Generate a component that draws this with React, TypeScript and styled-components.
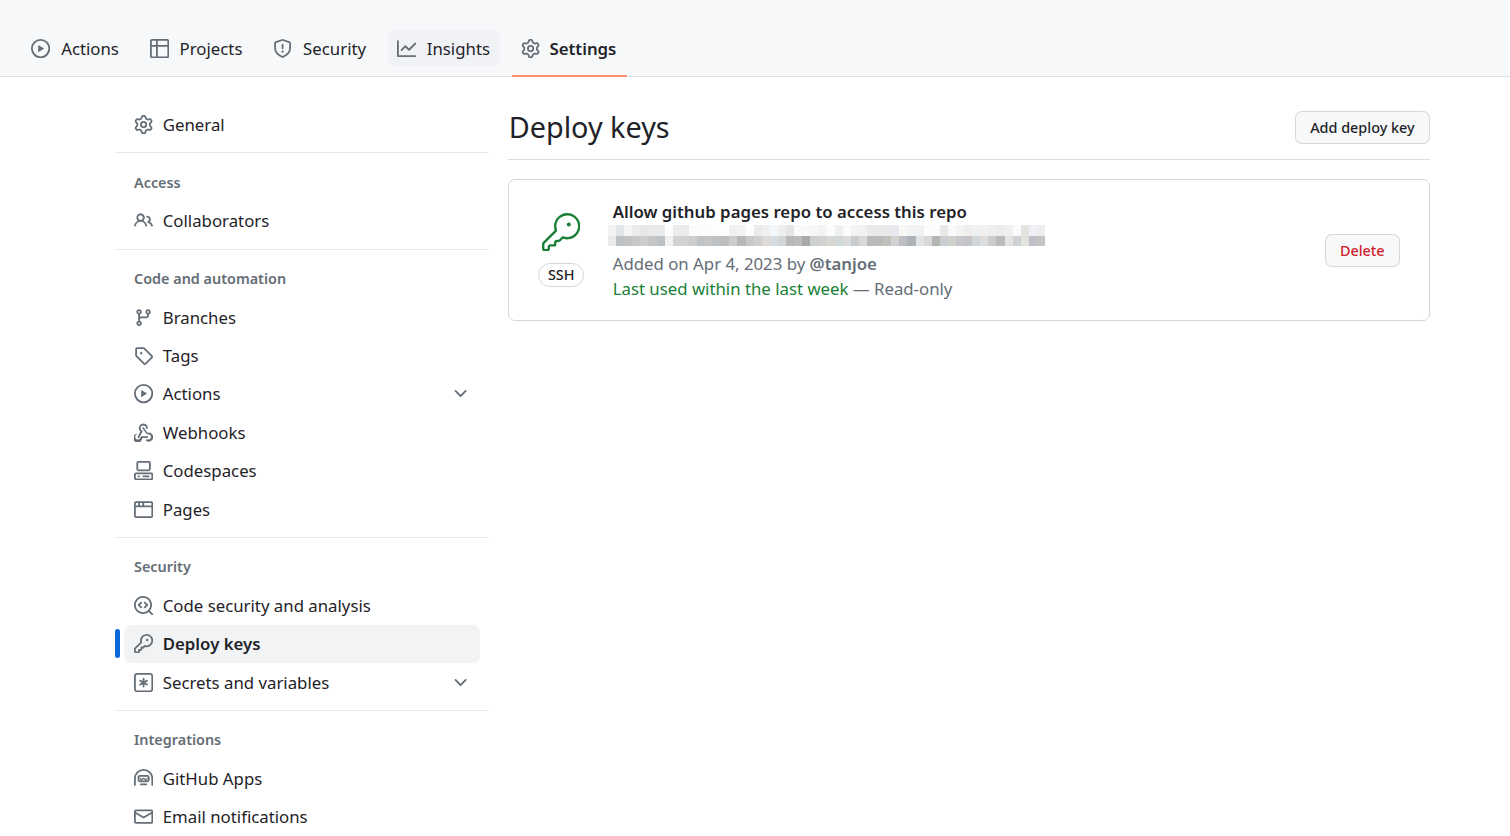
import React from "react";
import styled, { createGlobalStyle } from "styled-components";
import { GoKey } from "react-icons/go";

const Global = createGlobalStyle`
  html, body { margin: 0; padding: 0; background: #fff; height: 836px; overflow: hidden; }
  body { font-family: "Noto Sans", sans-serif; font-size: 16.8px; line-height: 1.5; color: #1f2328; }
`;

const TopBar = styled.nav`
  display: flex; gap: 11.5px; height: 45.5px;
  padding: 30px 0 0 22.2px; background: #f6f8fa; border-bottom: 1px solid #d8dee4;
`;
const Tab = styled.a<{ $active?: boolean; $hover?: boolean }>`
  position: relative; display: flex; align-items: center; gap: ${(p) => (p.$active ? "9.6px" : "10.8px")};
  height: 36px; box-sizing: border-box;
  padding: 1.5px 10.2px 0 9px; border-radius: 7px; color: #1f2328; font-weight: ${(p) => (p.$active ? 600 : 400)};
  background: ${(p) => (p.$hover ? "rgba(175,184,193,0.08)" : "transparent")};
  svg { color: #656d76; flex: none; margin-top: -1px; }
  ${(p) => p.$active && `&::after { content: ""; position: absolute; left: 0; right: 0; bottom: -11px; height: 2.4px; background: #fd8c73; }`}
`;
const Layout = styled.div`
  display: flex; padding: 29.2px 80px 0 114.8px; gap: 19px;
`;
const Sidebar = styled.aside`
  flex: none; width: 374.4px;
`;
const Divider = styled.div`
  height: 1px; background: #e4e8ec; margin-top: 8.3px;
`;
const Heading = styled.div`
  padding: 18.4px 0 8.5px 19.2px; font-size: 14.4px; font-weight: 600; line-height: 21.6px; color: #656d76;
`;
const Row = styled.a<{ $active?: boolean }>`
  position: relative; display: flex; align-items: center; gap: 9.6px; height: 38.4px;
  margin: 0 9.6px; padding: 0 9.6px; border-radius: 7px; color: #1f2328;
  font-weight: ${(p) => (p.$active ? 600 : 400)};
  background: ${(p) => (p.$active ? "#f2f3f5" : "transparent")};
  svg { color: #656d76; flex: none; }
  ${(p) => p.$active && `&::before { content: ""; position: absolute; left: -9.6px; top: 4.8px; bottom: 4.8px; width: 4.8px; border-radius: 7px; background: #0969da; }`}
`;
const ChevronSlot = styled.span`
  display: flex; margin-left: auto;
`;
const Main = styled.main`
  flex: 1; min-width: 0; padding-top: 3.8px;
`;
const PageHead = styled.header`
  display: flex; align-items: center; justify-content: space-between;
  padding-bottom: 14px; border-bottom: 1px solid #d8dee4;
`;
const Title = styled.h1`
  margin: 0; font-size: 28.8px; font-weight: 400; line-height: 35px; padding: 0 0 1px 0.5px;
`;
const Button = styled.button<{ $danger?: boolean }>`
  height: 33px; padding: 0 14.4px; box-sizing: border-box; font: 500 14.4px/1.5 "Noto Sans", sans-serif;
  background: #f6f8fa; border: 1px solid rgba(31,35,40,0.15); border-radius: 7px;
  color: ${(p) => (p.$danger ? "#cf222e" : "#1f2328")};
`;
const Card = styled.section`
  display: flex; align-items: flex-start; margin-top: 19px; height: 142px; box-sizing: border-box;
  padding: 18.5px 29px 0 29px; border: 1px solid #d0d7de; border-radius: 7px;
`;
const KeyType = styled.div`
  flex: none; display: flex; flex-direction: column; align-items: center; gap: 12px; width: 46px; padding-top: 14px;
  svg { color: #1a7f37; }
`;
const Pill = styled.span`
  display: block; width: 46px; box-sizing: border-box; text-align: center; height: 24px;
  font-size: 14.4px; font-weight: 500; line-height: 22px; border: 1px solid #d0d7de; border-radius: 24px;
`;
const Info = styled.div`
  flex: 1; min-width: 0; margin-left: 28.5px;
`;
const KeyTitle = styled.strong`
  display: block; font-weight: 600; line-height: 25.2px;
`;
const Blur = styled.svg`
  display: block; width: 437px; height: 21px; margin: 0.8px 0 5px -4.5px;
`;
const Meta = styled.div`
  color: #656d76; line-height: 25.2px;
`;
const Author = styled.strong`
  font-weight: 600;
`;
const Green = styled.span`
  color: #1a7f37;
`;
const Action = styled.div`
  flex: none; padding-top: 35.5px;
`;

const top = "f3f3f3 e3e6e8 f5f5f5 ebebeb e8e8e8 e8eaec e9eaec fdfdfd ebebeb ebebeb fbfbfb fbfbfb fcfcfc fdfdfd fefefe f0f0f0 f2f3f5 fdfdfd ebebeb f0f0f0 f5f8fa eeeeee e5e5e5 fbfbfb f9f9f9 f7f7f7 f3f3f3 fcfcfc f0f0f0 fcfcfc f3f3f3 f2f2f2 e9e9e9 e9e9e9 e9e9ea e8e9ee f9f7f3 f1f3f5 f2f2f2 fcfcfc fcfcfc e8e8e6 f8fafc f4f4f4 f0eeec eef0f2 f2f0ee eeeeee ececec eef0f2 fbfbfb e3e3df eef0f4 eeeeee".split(" ");
const bottom = "eaeaea bcc1c5 c4c4c4 c8c8c8 cdcdcd c5c6c8 bcc1c5 f0f0f0 d2d2d2 d2d2d2 cfcdcb c0c3c6 c6c5c3 bdc1c3 bcbdbd cccccc b8b8b8 c8c8c8 cfcfcf dcd9d6 d5dce0 d2d6d6 b8b8b8 bcbcbc a9a9a9 cdd0d0 d2d2d2 d8d6d2 d0d8dc dbdbdb c6ccd0 d8d8d8 bbbbbb bbbbbb c4c0bc d2d2d2 bcc0c4 aeb4b6 e0e3e6 d8d8d8 b4b4b2 c8ced2 d0d0cc c4c8cc c4c4c6 d0d6da dedede cccccc bbbbbb e3e3e3 ccd2d6 e3e3de c0c0c8 c4c4c4".split(" ");

const paths = {
  gear: "M8 0a8.2 8.2 0 0 1 .701.031C9.444.095 9.99.645 10.16 1.29l.288 1.107c.018.066.079.158.212.224.231.114.454.243.668.386.123.082.233.09.299.071l1.103-.303c.644-.176 1.392.021 1.82.63.27.385.506.792.704 1.218.315.675.111 1.422-.364 1.891l-.814.806c-.049.048-.098.147-.088.294.016.257.016.515 0 .772-.01.147.038.246.088.294l.814.806c.475.469.679 1.216.364 1.891a7.977 7.977 0 0 1-.704 1.217c-.428.61-1.176.807-1.82.63l-1.102-.302c-.067-.019-.177-.011-.3.071a5.909 5.909 0 0 1-.668.386c-.133.066-.194.158-.211.224l-.29 1.106c-.168.646-.715 1.196-1.458 1.26a8.006 8.006 0 0 1-1.402 0c-.743-.064-1.289-.614-1.458-1.26l-.289-1.106c-.018-.066-.079-.158-.212-.224a5.738 5.738 0 0 1-.668-.386c-.123-.082-.233-.09-.299-.071l-1.103.303c-.644.176-1.392-.021-1.82-.63a8.12 8.12 0 0 1-.704-1.218c-.315-.675-.111-1.422.363-1.891l.815-.806c.05-.048.098-.147.088-.294a6.214 6.214 0 0 1 0-.772c.01-.147-.038-.246-.088-.294l-.815-.806C.635 6.045.431 5.298.746 4.623a7.92 7.92 0 0 1 .704-1.217c.428-.61 1.176-.807 1.82-.63l1.102.302c.067.019.177.011.3-.071.214-.143.437-.272.668-.386.133-.066.194-.158.211-.224l.29-1.106C6.009.645 6.556.095 7.299.03 7.53.01 7.764 0 8 0Zm-.571 1.525c-.036.003-.108.036-.137.146l-.289 1.105c-.147.561-.549.967-.998 1.189-.173.086-.34.183-.5.29-.417.278-.97.423-1.529.27l-1.103-.303c-.109-.03-.175.016-.195.045-.22.312-.412.644-.573.99-.014.031-.021.11.059.19l.815.806c.411.406.562.957.53 1.456a4.709 4.709 0 0 0 0 .582c.032.499-.119 1.05-.53 1.456l-.815.806c-.081.08-.073.159-.059.19.162.346.353.677.573.989.02.03.085.076.195.046l1.102-.303c.56-.153 1.113-.008 1.53.27.161.107.328.204.501.29.447.222.85.629.997 1.189l.289 1.105c.029.109.101.143.137.146a6.6 6.6 0 0 0 1.142 0c.036-.003.108-.036.137-.146l.289-1.105c.147-.561.549-.967.998-1.189.173-.086.34-.183.5-.29.417-.278.97-.423 1.529-.27l1.103.303c.109.029.175-.016.195-.045.22-.313.411-.644.573-.99.014-.031.021-.11-.059-.19l-.815-.806c-.411-.406-.562-.957-.53-1.456a4.709 4.709 0 0 0 0-.582c-.032-.499.119-1.05.53-1.456l.815-.806c.081-.08.073-.159.059-.19a6.464 6.464 0 0 0-.573-.989c-.02-.03-.085-.076-.195-.046l-1.102.303c-.56.153-1.113.008-1.53-.27a4.44 4.44 0 0 0-.501-.29c-.447-.222-.85-.629-.997-1.189l-.289-1.105c-.029-.11-.101-.143-.137-.146a6.6 6.6 0 0 0-1.142 0ZM11 8a3 3 0 1 1-6 0 3 3 0 0 1 6 0ZM9.5 8a1.5 1.5 0 1 0-3.001.001A1.5 1.5 0 0 0 9.5 8Z",
  play: "M8 0a8 8 0 1 1 0 16A8 8 0 0 1 8 0ZM1.5 8a6.5 6.5 0 1 0 13 0 6.5 6.5 0 0 0-13 0Zm4.879-2.773 4.264 2.559a.25.25 0 0 1 0 .428l-4.264 2.559A.25.25 0 0 1 6 10.559V5.442a.25.25 0 0 1 .379-.215Z",
  table: "M0 1.75C0 .784.784 0 1.75 0h12.5C15.216 0 16 .784 16 1.75v12.5A1.75 1.75 0 0 1 14.25 16H1.75A1.75 1.75 0 0 1 0 14.25ZM6.5 6.5v8h7.75a.25.25 0 0 0 .25-.25V6.5Zm8-1.5V1.75a.25.25 0 0 0-.25-.25H6.5V5Zm-13 1.5v7.75c0 .138.112.25.25.25H5v-8ZM5 5V1.5H1.75a.25.25 0 0 0-.25.25V5Z",
  shield: "M7.467.133a1.748 1.748 0 0 1 1.066 0l5.25 1.68A1.75 1.75 0 0 1 15 3.48V7c0 1.566-.32 3.182-1.303 4.682-.983 1.498-2.585 2.813-5.032 3.855a1.697 1.697 0 0 1-1.33 0c-2.447-1.042-4.049-2.357-5.032-3.855C1.32 10.182 1 8.566 1 7V3.48a1.75 1.75 0 0 1 1.217-1.667Zm.61 1.429a.25.25 0 0 0-.153 0l-5.25 1.68a.25.25 0 0 0-.174.238V7c0 1.358.275 2.666 1.057 3.86.784 1.194 2.121 2.34 4.366 3.297a.196.196 0 0 0 .154 0c2.245-.956 3.582-2.104 4.366-3.298C13.225 9.666 13.5 8.36 13.5 7V3.48a.251.251 0 0 0-.174-.237l-5.25-1.68ZM8.75 4.75v3a.75.75 0 0 1-1.5 0v-3a.75.75 0 0 1 1.5 0ZM9 10.5a1 1 0 1 1-2 0 1 1 0 0 1 2 0Z",
  graph: "M1.5 1.75V13.5h13.75a.75.75 0 0 1 0 1.5H.75a.75.75 0 0 1-.75-.75V1.75a.75.75 0 0 1 1.5 0Zm14.28 2.53-5.25 5.25a.75.75 0 0 1-1.06 0L7 7.06 4.28 9.78a.751.751 0 0 1-1.042-.018.751.751 0 0 1-.018-1.042l3.25-3.25a.75.75 0 0 1 1.06 0L10 7.94l4.72-4.72a.751.751 0 0 1 1.042.018.751.751 0 0 1 .018 1.042Z",
  people: "M2 5.5a3.5 3.5 0 1 1 5.898 2.549 5.508 5.508 0 0 1 3.034 4.084.75.75 0 1 1-1.482.235 4 4 0 0 0-7.9 0 .75.75 0 0 1-1.482-.236A5.507 5.507 0 0 1 3.102 8.05 3.493 3.493 0 0 1 2 5.5ZM11 4a3.001 3.001 0 0 1 2.22 5.018 5.01 5.01 0 0 1 2.56 3.012.749.749 0 0 1-.885.954.752.752 0 0 1-.549-.514 3.507 3.507 0 0 0-2.522-2.372.75.75 0 0 1-.574-.73v-.352a.75.75 0 0 1 .416-.672A1.5 1.5 0 0 0 11 5.5.75.75 0 0 1 11 4Zm-5.5-.5a2 2 0 1 0-.001 3.999A2 2 0 0 0 5.5 3.5Z",
  branch: "M9.5 3.25a2.25 2.25 0 1 1 3 2.122V6A2.5 2.5 0 0 1 10 8.5H6a1 1 0 0 0-1 1v1.128a2.251 2.251 0 1 1-1.5 0V5.372a2.25 2.25 0 1 1 1.5 0v1.836A2.493 2.493 0 0 1 6 7h4a1 1 0 0 0 1-1v-.628A2.25 2.25 0 0 1 9.5 3.25Zm-6 0a.75.75 0 1 0 1.5 0 .75.75 0 0 0-1.5 0Zm8.25-.75a.75.75 0 1 0 0 1.5.75.75 0 0 0 0-1.5ZM4.25 12a.75.75 0 1 0 0 1.5.75.75 0 0 0 0-1.5Z",
  tag: "M1 7.775V2.75C1 1.784 1.784 1 2.75 1h5.025c.464 0 .91.184 1.238.513l6.25 6.25a1.75 1.75 0 0 1 0 2.474l-5.026 5.026a1.75 1.75 0 0 1-2.474 0l-6.25-6.25A1.752 1.752 0 0 1 1 7.775Zm1.5 0c0 .066.026.13.073.177l6.25 6.25a.25.25 0 0 0 .354 0l5.025-5.025a.25.25 0 0 0 0-.354l-6.25-6.25a.25.25 0 0 0-.177-.073H2.75a.25.25 0 0 0-.25.25ZM6 5a1 1 0 1 1 0 2 1 1 0 0 1 0-2Z",
  webhook: "M5.5 4.25a2.25 2.25 0 0 1 4.5 0 .75.75 0 0 0 1.5 0 3.75 3.75 0 1 0-6.14 2.889l-2.272 4.258a.75.75 0 0 0 1.324.706L7 7.25a.75.75 0 0 0-.309-1.015A2.25 2.25 0 0 1 5.5 4.25Z M7.364 3.607a.75.75 0 0 1 1.03.257l2.608 4.349a3.75 3.75 0 1 1-.628 6.785.75.75 0 0 1 .61-1.37 2.25 2.25 0 1 0 .31-4.238.75.75 0 0 1-.873-.336L7.107 4.636a.75.75 0 0 1 .257-1.03Z M2.785 8.433a.75.75 0 0 1-.42.975 2.25 2.25 0 1 0 3.135 2.342.75.75 0 0 1 .75-.75h4.75a.75.75 0 0 1 0 1.5H6.9a3.75 3.75 0 1 1-5.09-3.487.75.75 0 0 1 .975.42Z",
  codespaces: "M0 11.25c0-.966.784-1.75 1.75-1.75h12.5c.966 0 1.75.784 1.75 1.75v3A1.75 1.75 0 0 1 14.25 16H1.75A1.75 1.75 0 0 1 0 14.25Zm2-9.5C2 .784 2.784 0 3.75 0h8.5C13.216 0 14 .784 14 1.75v5a1.75 1.75 0 0 1-1.75 1.75h-8.5A1.75 1.75 0 0 1 2 6.75Zm1.75-.25a.25.25 0 0 0-.25.25v5c0 .138.112.25.25.25h8.5a.25.25 0 0 0 .25-.25v-5a.25.25 0 0 0-.25-.25Zm-2 9.5a.25.25 0 0 0-.25.25v3c0 .138.112.25.25.25h12.5a.25.25 0 0 0 .25-.25v-3a.25.25 0 0 0-.25-.25Z M7 12.75a.75.75 0 0 1 .75-.75h4.5a.75.75 0 0 1 0 1.5h-4.5a.75.75 0 0 1-.75-.75Zm-4 0a.75.75 0 0 1 .75-.75h.5a.75.75 0 0 1 0 1.5h-.5a.75.75 0 0 1-.75-.75Z",
  browser: "M0 2.75C0 1.784.784 1 1.75 1h12.5c.966 0 1.75.784 1.75 1.75v10.5A1.75 1.75 0 0 1 14.25 15H1.75A1.75 1.75 0 0 1 0 13.25ZM14.5 6h-13v7.25c0 .138.112.25.25.25h12.5a.25.25 0 0 0 .25-.25Zm-6-3.5v2h6V2.75a.25.25 0 0 0-.25-.25ZM5 2.5v2h2v-2Zm-3.25 0a.25.25 0 0 0-.25.25V4.5h2v-2Z",
  codescan: "M8.47 4.97a.75.75 0 0 0 0 1.06L9.94 7.5 8.47 8.97a.75.75 0 1 0 1.06 1.06l2-2a.75.75 0 0 0 0-1.06l-2-2a.75.75 0 0 0-1.06 0ZM6.53 6.03a.75.75 0 0 0-1.06-1.06l-2 2a.75.75 0 0 0 0 1.06l2 2a.75.75 0 1 0 1.06-1.06L5.06 7.5l1.47-1.47Z M12.246 13.307a7.501 7.501 0 1 1 1.06-1.06l2.474 2.473a.749.749 0 0 1-.326 1.275.749.749 0 0 1-.734-.215ZM1.5 7.5a6.002 6.002 0 0 0 3.608 5.504 6.002 6.002 0 0 0 6.486-1.117.748.748 0 0 1 .292-.293A6 6 0 1 0 1.5 7.5Z",
  key: "M10.5 0a5.499 5.499 0 1 1-1.288 10.848l-.932.932a.749.749 0 0 1-.53.22H7v.75a.749.749 0 0 1-.22.53l-.5.5a.749.749 0 0 1-.53.22H5v.75a.749.749 0 0 1-.22.53l-.5.5a.749.749 0 0 1-.53.22h-2A1.75 1.75 0 0 1 0 14.25v-2c0-.199.079-.389.22-.53l4.932-4.932A5.5 5.5 0 0 1 10.5 0Zm-4 5.5c-.001.431.069.86.205 1.269a.75.75 0 0 1-.181.768L1.5 12.56v1.69c0 .138.112.25.25.25h1.69l.06-.06v-1.19a.75.75 0 0 1 .75-.75h1.19l.06-.06v-1.19a.75.75 0 0 1 .75-.75h1.19l1.023-1.025a.75.75 0 0 1 .768-.18A4 4 0 1 0 6.5 5.5ZM11 6a1 1 0 1 1 0-2 1 1 0 0 1 0 2Z",
  keyAsterisk: "M0 2.75A2.75 2.75 0 0 1 2.75 0h10.5A2.75 2.75 0 0 1 16 2.75v10.5A2.75 2.75 0 0 1 13.25 16H2.75A2.75 2.75 0 0 1 0 13.25ZM2.75 1.5c-.69 0-1.25.56-1.25 1.25v10.5c0 .69.56 1.25 1.25 1.25h10.5c.69 0 1.25-.56 1.25-1.25V2.75c0-.69-.56-1.25-1.25-1.25Z M8 4a.75.75 0 0 1 .75.75V6.7l1.69-.975a.75.75 0 0 1 .75 1.3L9.5 8l1.69.976a.75.75 0 0 1-.75 1.298L8.75 9.3v1.951a.75.75 0 0 1-1.5 0V9.299l-1.69.976a.75.75 0 0 1-.75-1.3L6.5 8l-1.69-.975a.75.75 0 0 1 .75-1.3l1.69.976V4.75A.75.75 0 0 1 8 4Z",
  hubot: "M0 8a8 8 0 0 1 16 0v5.25a.75.75 0 0 1-1.5 0V8a6.5 6.5 0 1 0-13 0v5.25a.75.75 0 0 1-1.5 0Z M3 6.75C3 5.784 3.784 5 4.75 5h6.5c.966 0 1.75.784 1.75 1.75v2.5A1.75 1.75 0 0 1 11.25 11h-6.5A1.75 1.75 0 0 1 3 9.25ZM4.75 6.5a.25.25 0 0 0-.25.25v2.5c0 .138.112.25.25.25h6.5a.25.25 0 0 0 .25-.25v-2.5a.25.25 0 0 0-.25-.25Z M5.1 7.2l1.1 1.2L8 7.4l1.8 1 1.1-1.2.5.9-1.4 1.6L8 8.6l-2 1.1-1.4-1.6Z M5.75 12h4.5a.75.75 0 0 1 0 1.5h-4.5a.75.75 0 0 1 0-1.5Z",
  mail: "M1.75 2h12.5c.966 0 1.75.784 1.75 1.75v8.5A1.75 1.75 0 0 1 14.25 14H1.75A1.75 1.75 0 0 1 0 12.25v-8.5C0 2.784.784 2 1.75 2ZM1.5 12.251c0 .138.112.25.25.25h12.5a.25.25 0 0 0 .25-.25V5.809L8.38 9.397a.75.75 0 0 1-.76 0L1.5 5.809v6.442Zm13-8.181v-.32a.25.25 0 0 0-.25-.25H1.75a.25.25 0 0 0-.25.25v.32L8 7.88Z",
  chevron: "M12.78 5.22a.749.749 0 0 1 0 1.06l-4.25 4.25a.749.749 0 0 1-1.06 0L3.22 6.28a.749.749 0 1 1 1.06-1.06L8 8.939l3.72-3.719a.749.749 0 0 1 1.06 0Z",
};

type IconName = keyof typeof paths;

const Octicon = ({ name }: { name: IconName }) => (
  <svg width={19.2} height={19.2} viewBox="0 0 16 16" fill="currentColor" aria-hidden>
    <path d={paths[name]} />
  </svg>
);

const sections: { title?: string; items: { icon: IconName; label: string; more?: boolean; active?: boolean }[] }[] = [
  { items: [{ icon: "gear", label: "General" }] },
  { title: "Access", items: [{ icon: "people", label: "Collaborators" }] },
  {
    title: "Code and automation",
    items: [
      { icon: "branch", label: "Branches" },
      { icon: "tag", label: "Tags" },
      { icon: "play", label: "Actions", more: true },
      { icon: "webhook", label: "Webhooks" },
      { icon: "codespaces", label: "Codespaces" },
      { icon: "browser", label: "Pages" },
    ],
  },
  {
    title: "Security",
    items: [
      { icon: "codescan", label: "Code security and analysis" },
      { icon: "key", label: "Deploy keys", active: true },
      { icon: "keyAsterisk", label: "Secrets and variables", more: true },
    ],
  },
  {
    title: "Integrations",
    items: [
      { icon: "hubot", label: "GitHub Apps" },
      { icon: "mail", label: "Email notifications" },
    ],
  },
];

export default function App() {
  return (
    <>
      <Global />
      <TopBar>
        <Tab><Octicon name="play" />Actions</Tab>
        <Tab><Octicon name="table" />Projects</Tab>
        <Tab><Octicon name="shield" />Security</Tab>
        <Tab $hover><Octicon name="graph" />Insights</Tab>
        <Tab $active><Octicon name="gear" />Settings</Tab>
      </TopBar>
      <Layout>
        <Sidebar>
          {sections.map((s, i) => (
            <div key={i}>
              {s.title && <Heading>{s.title}</Heading>}
              {s.items.map((it) => (
                <Row key={it.label} $active={it.active}>
                  <Octicon name={it.icon} />
                  {it.label}
                  {it.more && <ChevronSlot><Octicon name="chevron" /></ChevronSlot>}
                </Row>
              ))}
              {i < sections.length - 1 && <Divider />}
            </div>
          ))}
        </Sidebar>
        <Main>
          <PageHead>
            <Title>Deploy keys</Title>
            <Button>Add deploy key</Button>
          </PageHead>
          <Card>
            <KeyType>
              <GoKey size={38.4} />
              <Pill>SSH</Pill>
            </KeyType>
            <Info>
              <KeyTitle>Allow github pages repo to access this repo</KeyTitle>
              <Blur viewBox="0 0 54 2" preserveAspectRatio="none" shapeRendering="crispEdges">
                {top.map((c, i) => <rect key={i} x={i} y={0} width={1} height={1} fill={`#${c}`} />)}
                {bottom.map((c, i) => <rect key={i} x={i} y={1} width={1} height={1} fill={`#${c}`} />)}
              </Blur>
              <Meta>Added on Apr 4, 2023 by <Author>@tanjoe</Author></Meta>
              <Meta><Green>Last used within the last week</Green> — Read-only</Meta>
            </Info>
            <Action><Button $danger>Delete</Button></Action>
          </Card>
        </Main>
      </Layout>
    </>
  );
}
